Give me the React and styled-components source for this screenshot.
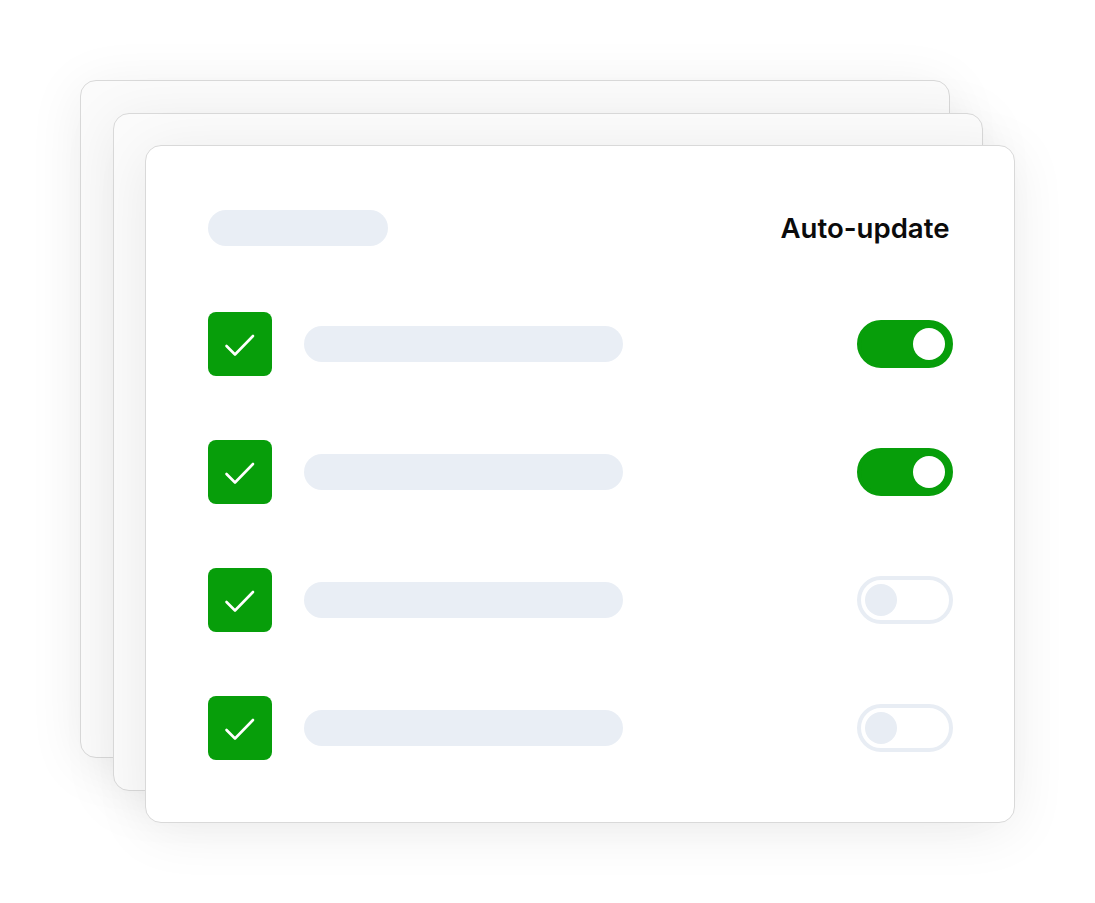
import React from "react"
import styled, { createGlobalStyle } from "styled-components"

const Global = createGlobalStyle`
  html, body { margin: 0; padding: 0; background: #fff; }
  body { font-family: Inter, "Noto Sans", sans-serif; }
`

const Page = styled.div`
  width: 1095px;
  height: 903px;
  padding: 80px 0 0 80px;
  box-sizing: border-box;
`

const Stack = styled.div`
  display: grid;
`

const Card = styled.div`
  grid-area: 1 / 1;
  width: 870px;
  height: 678px;
  box-sizing: border-box;
  margin-left: ${p => p.offset}px;
  margin-top: ${p => p.offset}px;
  border: 1.5px solid #d9d9d9;
  border-radius: 16px;
  background: ${p => p.front ? "#ffffff" : "#fbfbfb"};
  box-shadow: 0 8px 56px rgba(0, 0, 0, 0.075);
`

const Content = styled.div`
  display: flex;
  flex-direction: column;
  gap: 64px;
  padding: 61.5px;
`

const Row = styled.div`
  display: flex;
  align-items: center;
  justify-content: space-between;
  height: ${p => p.h}px;
`

const Left = styled.div`
  display: flex;
  align-items: center;
  gap: 32px;
`

const Pill = styled.div`
  width: ${p => p.w}px;
  height: 36px;
  border-radius: 18px;
  background: #e9eef5;
`

const Title = styled.div`
  font-family: Inter, sans-serif;
  font-weight: 600;
  font-size: 27.6px;
  line-height: 40px;
  color: #0b0b0b;
  margin-right: 3px;
`

const Check = styled.div`
  width: 64px;
  height: 64px;
  border-radius: 8px;
  background: #079e0a;
  display: flex;
  align-items: center;
  justify-content: center;
`

const Toggle = styled.div`
  width: 96px;
  height: 48px;
  box-sizing: border-box;
  border-radius: 24px;
  padding: 0 4px;
  display: flex;
  align-items: center;
  justify-content: ${p => p.on ? "flex-end" : "flex-start"};
  background: ${p => p.on ? "#079e0a" : "#ffffff"};
  border: 4px solid ${p => p.on ? "#079e0a" : "#e8edf4"};
`

const Knob = styled.div`
  width: 32px;
  height: 32px;
  border-radius: 50%;
  background: ${p => p.on ? "#ffffff" : "#e8edf4"};
`

const CheckIcon = () => (
  <svg width="64" height="64" viewBox="0 0 64 64">
    <path d="M18.5 34 L27 42.5 L45 24" fill="none" stroke="#fff" strokeWidth="2.6" strokeLinecap="round" strokeLinejoin="round" />
  </svg>
)

const items = [true, true, false, false]

export default function App() {
  return (
    <Page>
      <Global />
      <Stack>
        <Card offset={0} />
        <Card offset={32.5} />
        <Card offset={65} front>
          <Content>
            <Row h={40}>
              <Pill w={180} />
              <Title>Auto-update</Title>
            </Row>
            {items.map((on, i) => (
              <Row h={64} key={i}>
                <Left>
                  <Check><CheckIcon /></Check>
                  <Pill w={319} />
                </Left>
                <Toggle on={on}><Knob on={on} /></Toggle>
              </Row>
            ))}
          </Content>
        </Card>
      </Stack>
    </Page>
  )
}
